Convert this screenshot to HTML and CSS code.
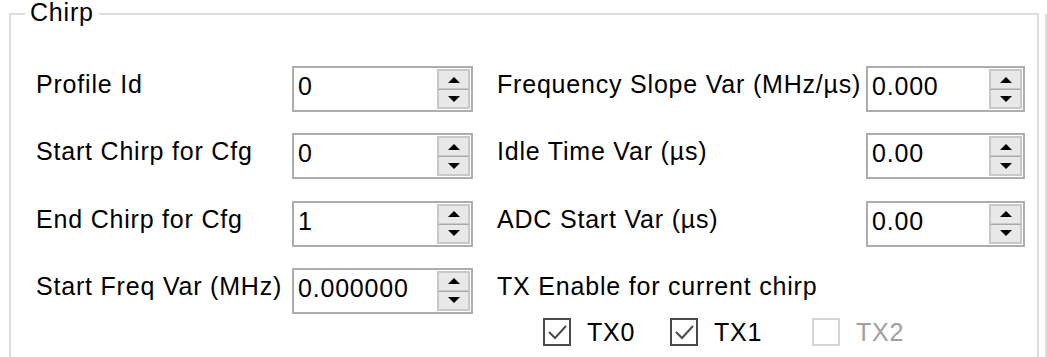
FILE: index.html
```html
<html>
<head>
    <link rel="stylesheet" href="styles.css">
    <title>Chirp</title>
</head>
<body>
    <div class="page">
        <fieldset class="group">
            <legend>Chirp</legend>
            <div class="grid">
                <label class="lbl">Profile Id</label>
                <div class="spin"><span class="val">0</span><div class="btns"><span class="up"></span><span class="dn"></span></div></div>
                <label class="lbl right">Frequency Slope Var (MHz/µs)</label>
                <div class="spin"><span class="val">0.000</span><div class="btns"><span class="up"></span><span class="dn"></span></div></div>

                <label class="lbl">Start Chirp for Cfg</label>
                <div class="spin"><span class="val">0</span><div class="btns"><span class="up"></span><span class="dn"></span></div></div>
                <label class="lbl right">Idle Time Var (µs)</label>
                <div class="spin"><span class="val">0.00</span><div class="btns"><span class="up"></span><span class="dn"></span></div></div>

                <label class="lbl">End Chirp for Cfg</label>
                <div class="spin"><span class="val">1</span><div class="btns"><span class="up"></span><span class="dn"></span></div></div>
                <label class="lbl right">ADC Start Var (µs)</label>
                <div class="spin"><span class="val">0.00</span><div class="btns"><span class="up"></span><span class="dn"></span></div></div>

                <label class="lbl">Start Freq Var (MHz)</label>
                <div class="spin"><span class="val">0.000000</span><div class="btns"><span class="up"></span><span class="dn"></span></div></div>
                <div class="tx">
                    <div class="lbl">TX Enable for current chirp</div>
                    <div class="checks">
                        <label class="chk c0">
                            <span class="box"><svg width="24" height="24" viewBox="0 0 24 24"><polyline points="4,12 10,18 21,6" fill="none" stroke="#4a4a4a" stroke-width="2"/></svg></span>
                            TX0
                        </label>
                        <label class="chk c1">
                            <span class="box"><svg width="24" height="24" viewBox="0 0 24 24"><polyline points="4,12 10,18 21,6" fill="none" stroke="#4a4a4a" stroke-width="2"/></svg></span>
                            TX1
                        </label>
                        <label class="chk off">
                            <span class="box"></span>
                            TX2
                        </label>
                    </div>
                </div>
            </div>
        </fieldset>
        <div class="next"></div>
    </div>
</body>
</html>
```

FILE: styles.css
```css
body
{
    margin: 0;
    overflow: hidden;
    background: #fff;
    color: #000;
    font-family: "Liberation Sans", Arial, sans-serif;
    font-size: 25px;
    letter-spacing: 0.8px;
}
.page
{
    display: flex;
    align-items: flex-start;
}
.group
{
    box-sizing: border-box;
    width: 1030px;
    height: 400px;
    margin: 0 0 0 9px;
    padding: 38px 0 0 25px;
    border: 2px solid #dcdcdc;
    flex: none;
}
.group legend
{
    margin-left: -11px;
    padding: 0 5px 4px 5px;
    line-height: 24px;
}
.next
{
    margin: 14px 0 0 6px;
    height: 400px;
    border-left: 2px solid #dcdcdc;
}
.grid
{
    display: grid;
    grid-template-columns: 256px 181px 24px 369px 159px;
    grid-auto-rows: 46px;
    row-gap: 21.33px;
}
.lbl
{
    padding-top: 6px;
    line-height: 24px;
    white-space: nowrap;
}
.right, .tx
{
    grid-column: 4;
}
.tx
{
    grid-column: 4 / 6;
}
.spin
{
    box-sizing: border-box;
    height: 46px;
    border: 2px solid #adadad;
    display: flex;
    justify-content: space-between;
}
.val
{
    padding: 6px 0 0 4px;
    line-height: 24px;
}
.btns
{
    width: 33px;
    margin: 1px 1px 1px 0;
    display: flex;
    flex-direction: column;
}
.btns span
{
    flex: 1;
    box-sizing: border-box;
    border: 2px solid #c8c8c8;
    background: #e8e8e8;
    display: flex;
    align-items: center;
    justify-content: center;
}
.btns .up
{
    border-bottom-width: 1px;
}
.btns .dn
{
    border-top: 1px solid #a8a8a8;
}
.btns span::after
{
    content: "";
    border-left: 6px solid transparent;
    border-right: 6px solid transparent;
}
.btns .up::after
{
    border-bottom: 6px solid #000;
}
.btns .dn::after
{
    border-top: 6px solid #000;
}
.checks
{
    display: flex;
    margin: 20px 0 0 46px;
}
.chk
{
    display: flex;
    align-items: center;
    line-height: 24px;
}
.chk.c0
{
    width: 127px;
}
.chk.c1
{
    width: 142px;
}
.box
{
    box-sizing: border-box;
    width: 28px;
    height: 28px;
    margin-right: 16px;
    border: 2px solid #4a4a4a;
    display: flex;
    align-items: center;
    justify-content: center;
}
.off
{
    color: #a0a0a0;
}
.off .box
{
    border-color: #d4d4d4;
}
```
